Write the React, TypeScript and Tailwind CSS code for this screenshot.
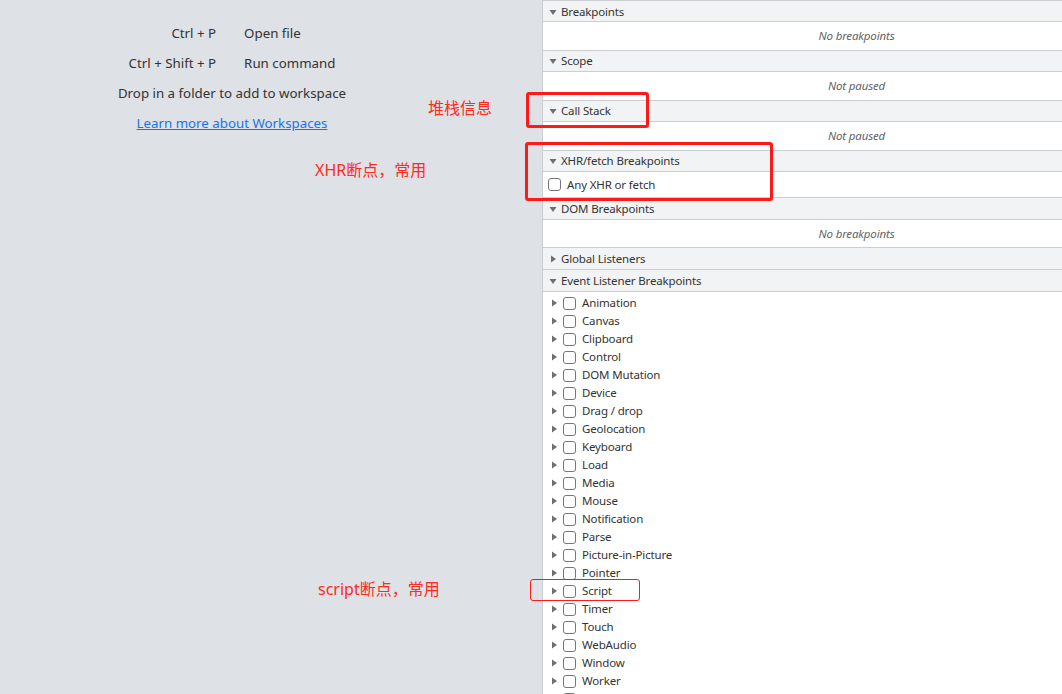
import React from 'react';

const events = [
    'Animation', 'Canvas', 'Clipboard', 'Control', 'DOM Mutation', 'Device', 'Drag / drop',
    'Geolocation', 'Keyboard', 'Load', 'Media', 'Mouse', 'Notification', 'Parse',
    'Picture-in-Picture', 'Pointer', 'Script', 'Timer', 'Touch', 'WebAudio', 'Window', 'Worker', 'XHR',
];

const Down = () => (
    <svg width="8" height="8" viewBox="0 0 8 8" className="mr-[4px] shrink-0">
        <path d="M0.5 2 L7.5 2 L4 7 Z" fill="#6e6e6e" />
    </svg>
);

const Right = () => (
    <svg width="8" height="8" viewBox="0 0 8 8" className="mr-[4px] shrink-0">
        <path d="M2 0.5 L7 4 L2 7.5 Z" fill="#6e6e6e" />
    </svg>
);

const Box = () => (
    <span className="block w-[13px] h-[13px] rounded-[3px] border border-[#767676] bg-white shrink-0" />
);

const Header = ({ title, open = true, h = 'h-[21px]' }: { title: string; open?: boolean; h?: string }) => (
    <div className={`flex items-center ${h} pl-[6px] bg-[#f1f3f4] border-b border-[#cacdd1] text-[#333]`}>
        {open ? <Down /> : <Right />}
        <span>{title}</span>
    </div>
);

const Empty = ({ text, h = 'h-[29px]' }: { text: string; h?: string }) => (
    <div className={`flex items-center justify-center ${h} italic text-[#5f6368] border-b border-[#cacdd1]`}>
        {text}
    </div>
);

export default function App() {
    return (
        <div className="relative flex w-[1062px] h-[694px] overflow-hidden bg-[#dee1e6]" style={{ fontFamily: '"Segoe UI", "Noto Sans", "Noto Sans CJK SC", sans-serif' }}>
            <div className="w-[542px] shrink-0 flex flex-col items-center pt-[22px] pr-[78px] text-[13.3px] text-[#333]">
                <div className="grid grid-cols-[auto_auto] gap-x-[28px] gap-y-[8px] leading-[22px]">
                    <span className="text-right">Ctrl + P</span>
                    <span>Open file</span>
                    <span className="text-right">Ctrl + Shift + P</span>
                    <span>Run command</span>
                </div>
                <div className="mt-[8px] leading-[22px]">Drop in a folder to add to workspace</div>
                <a className="mt-[8px] leading-[22px] text-[#1a73e8] underline">Learn more about Workspaces</a>
            </div>

            <div className="w-[628px] shrink-0 bg-white border-l border-t border-[#cacdd1] text-[11.5px] tracking-[-0.15px]">
                <div className="pt-[1px] bg-[#f1f3f4]" />
                <Header title="Breakpoints" h="h-[20px]" />
                <Empty text="No breakpoints" h="h-[29px]" />
                <Header title="Scope" />
                <Empty text="Not paused" />
                <Header title="Call Stack" />
                <Empty text="Not paused" />
                <Header title="XHR/fetch Breakpoints" />
                <div className="flex items-center h-[26px] pl-[5px] gap-[6px] text-[#333] border-b border-[#cacdd1]">
                    <Box />
                    <span>Any XHR or fetch</span>
                </div>
                <Header title="DOM Breakpoints" h="h-[22px]" />
                <Empty text="No breakpoints" h="h-[28px]" />
                <Header title="Global Listeners" open={false} h="h-[22px]" />
                <Header title="Event Listener Breakpoints" h="h-[22px]" />
                <div className="pt-[2px]">
                    {events.map((e) => (
                        <div key={e} className="flex items-center h-[18px] pl-[7px] text-[#333]">
                            <Right />
                            <span className="ml-[1px] mr-[6px] flex"><Box /></span>
                            <span>{e}</span>
                        </div>
                    ))}
                </div>
            </div>

            <div className="absolute left-[428px] top-[98px] text-[16px] leading-[20px] text-[#ff2a1a]">堆栈信息</div>
            <div className="absolute left-[315px] top-[160px] text-[16px] leading-[20px] text-[#ff2a1a]">XHR断点，常用</div>
            <div className="absolute left-[318px] top-[579px] text-[16px] leading-[20px] text-[#ff2a1a]">script断点，常用</div>

            <div className="absolute left-[526px] top-[92px] w-[123px] h-[36px] border-[3px] border-[#ff1a1a] rounded-[3px]" />
            <div className="absolute left-[525px] top-[142px] w-[248px] h-[59px] border-[3px] border-[#ff1a1a] rounded-[3px]" />
            <div className="absolute left-[530px] top-[579px] w-[110px] h-[22px] border border-[#ff1a1a] rounded-[3px]" />
        </div>
    );
}
